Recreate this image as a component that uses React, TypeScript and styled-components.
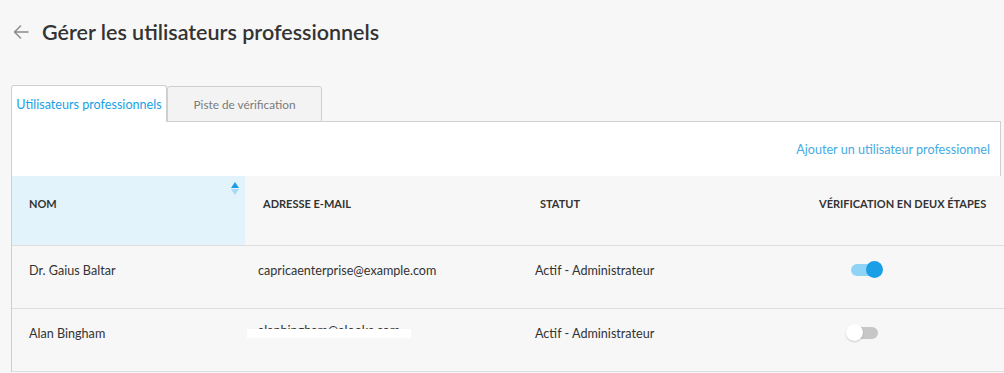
import React from 'react';
import styled, { createGlobalStyle } from 'styled-components';

const GlobalStyle = createGlobalStyle`
  html, body {
    margin: 0;
    padding: 0;
    background: #f7f7f7;
    font-family: Lato, "Open Sans", sans-serif;
    color: #333;
  }
`;

const BORDER = '#cfcfcf';
const ROW_LINE = '#dedede';
const BLUE = '#1a9fe6';

interface User {
  name: string;
  email: string;
  status: string;
  twoStep: boolean;
  redacted?: boolean;
}

const users: User[] = [
  {
    name: 'Dr. Gaius Baltar',
    email: 'capricaenterprise@example.com',
    status: 'Actif - Administrateur',
    twoStep: true,
  },
  {
    name: 'Alan Bingham',
    email: 'alanbingham@alooks.com',
    status: 'Actif - Administrateur',
    twoStep: false,
    redacted: true,
  },
];

const BackArrow = () => (
  <svg width="16" height="14" viewBox="0 0 16 14" fill="none">
    <path
      d="M15 7H1.5M7.5 1L1.5 7l6 6"
      stroke="#8a8a8a"
      strokeWidth="1.5"
      strokeLinecap="round"
      strokeLinejoin="round"
    />
  </svg>
);

const SortIcon = () => (
  <svg width="8" height="13" viewBox="0 0 8 13">
    <path d="M4 0L8 6H0z" fill={BLUE} />
    <path d="M0 7h8L4 13z" fill="#a6daf6" />
  </svg>
);

const Page = styled.div`
  width: 1004px;
`;

const Header = styled.div`
  display: flex;
  align-items: center;
  height: 26px;
  padding: 19px 0 0 13px;
  gap: 13px;
`;

const Title = styled.h1`
  margin: 0;
  font-size: 21.5px;
  font-weight: 600;
  line-height: 26px;
  color: #333;
`;

const Content = styled.div`
  margin: 40px 0 0 11px;
`;

const TabBar = styled.div`
  display: flex;
  align-items: flex-end;
  height: 37px;
  margin-right: 3px;
`;

const Tab = styled.div<{ active?: boolean }>`
  display: flex;
  align-items: center;
  justify-content: center;
  box-sizing: border-box;
  height: ${p => (p.active ? 37 : 36)}px;
  width: ${p => (p.active ? 156 : 155)}px;
  border: 1px solid ${BORDER};
  border-bottom: ${p => (p.active ? 'none' : `1px solid ${BORDER}`)};
  border-radius: 3px 3px 0 0;
  background: ${p => (p.active ? '#fff' : '#f3f3f3')};
  color: ${p => (p.active ? BLUE : '#7a7a7a')};
  font-size: ${p => (p.active ? 12.6 : 11.8)}px;
  white-space: nowrap;
  padding-top: 1px;
`;

const TabFiller = styled.div`
  flex: 1;
  border-bottom: 1px solid ${BORDER};
`;

const Toolbar = styled.div`
  display: flex;
  align-items: center;
  justify-content: flex-end;
  height: 54px;
  margin-right: 3px;
  padding-right: 10px;
  background: #fff;
  border-left: 1px solid ${BORDER};
  border-right: 1px solid ${BORDER};
`;

const AddLink = styled.a`
  color: #45abe4;
  font-size: 12.6px;
  cursor: pointer;
`;

const Table = styled.div`
  border-left: 1px solid ${BORDER};
`;

const Row = styled.div<{ head?: boolean }>`
  display: grid;
  grid-template-columns: 233px 277px 279px 1fr;
  height: ${p => (p.head ? 69 : 62)}px;
  border-bottom: 1px solid ${ROW_LINE};
`;

const HeadCell = styled.div<{ sorted?: boolean }>`
  position: relative;
  padding: 21px 0 0 ${p => (p.sorted ? 17 : 18)}px;
  background: ${p => (p.sorted ? '#e2f3fc' : '#f7f7f7')};
  font-size: 11px;
  line-height: 14px;
  font-weight: 700;
  text-transform: uppercase;
  color: #333;
  white-space: nowrap;
`;

const SortBadge = styled.span`
  position: absolute;
  top: 6px;
  right: 6px;
  display: flex;
`;

const Cell = styled.div<{ first?: boolean }>`
  padding: 17px 0 0 ${p => (p.first ? 17 : 13)}px;
  font-size: 12.6px;
  line-height: 16px;
  color: #333;
  white-space: nowrap;
`;

const Redacted = styled.span`
  position: relative;
  display: inline-block;
  margin-top: -3px;
  vertical-align: top;
  line-height: 16px;

  &::after {
    content: '';
    position: absolute;
    left: -11px;
    top: 6px;
    width: 164px;
    height: 9px;
    background: #fff;
  }
`;

const SwitchCell = styled.div`
  padding: 15px 0 0 45px;
`;

const Switch = styled.div<{ on: boolean }>`
  position: relative;
  width: 37px;
  height: 18px;
`;

const Track = styled.span<{ on: boolean }>`
  position: absolute;
  top: 3px;
  left: 5px;
  width: ${p => (p.on ? 25 : 27)}px;
  height: 12px;
  border-radius: 6px;
  background: ${p => (p.on ? '#8fd4f6' : '#c7c7c7')};
`;

const Knob = styled.span<{ on: boolean }>`
  position: absolute;
  top: 0;
  left: ${p => (p.on ? 20 : 0)}px;
  width: 17px;
  height: 17px;
  border-radius: 50%;
  background: ${p => (p.on ? BLUE : '#fff')};
  box-shadow: ${p => (p.on ? 'none' : '0 1px 2px rgba(0,0,0,0.18)')};
`;

const Toggle: React.FC<{ on: boolean }> = ({ on }) => (
  <Switch on={on}>
    <Track on={on} />
    <Knob on={on} />
  </Switch>
);

export default function App() {
  return (
    <Page>
      <GlobalStyle />
      <Header>
        <BackArrow />
        <Title>Gérer les utilisateurs professionnels</Title>
      </Header>
      <Content>
        <TabBar>
          <Tab active>Utilisateurs professionnels</Tab>
          <Tab>Piste de vérification</Tab>
          <TabFiller />
        </TabBar>
        <Toolbar>
          <AddLink>Ajouter un utilisateur professionnel</AddLink>
        </Toolbar>
        <Table>
          <Row head>
            <HeadCell sorted>
              Nom
              <SortBadge>
                <SortIcon />
              </SortBadge>
            </HeadCell>
            <HeadCell>Adresse e-mail</HeadCell>
            <HeadCell>Statut</HeadCell>
            <HeadCell>Vérification en deux étapes</HeadCell>
          </Row>
          {users.map(u => (
            <Row key={u.name}>
              <Cell first>{u.name}</Cell>
              <Cell>{u.redacted ? <Redacted>{u.email}</Redacted> : u.email}</Cell>
              <Cell>{u.status}</Cell>
              <SwitchCell>
                <Toggle on={u.twoStep} />
              </SwitchCell>
            </Row>
          ))}
        </Table>
      </Content>
    </Page>
  );
}
